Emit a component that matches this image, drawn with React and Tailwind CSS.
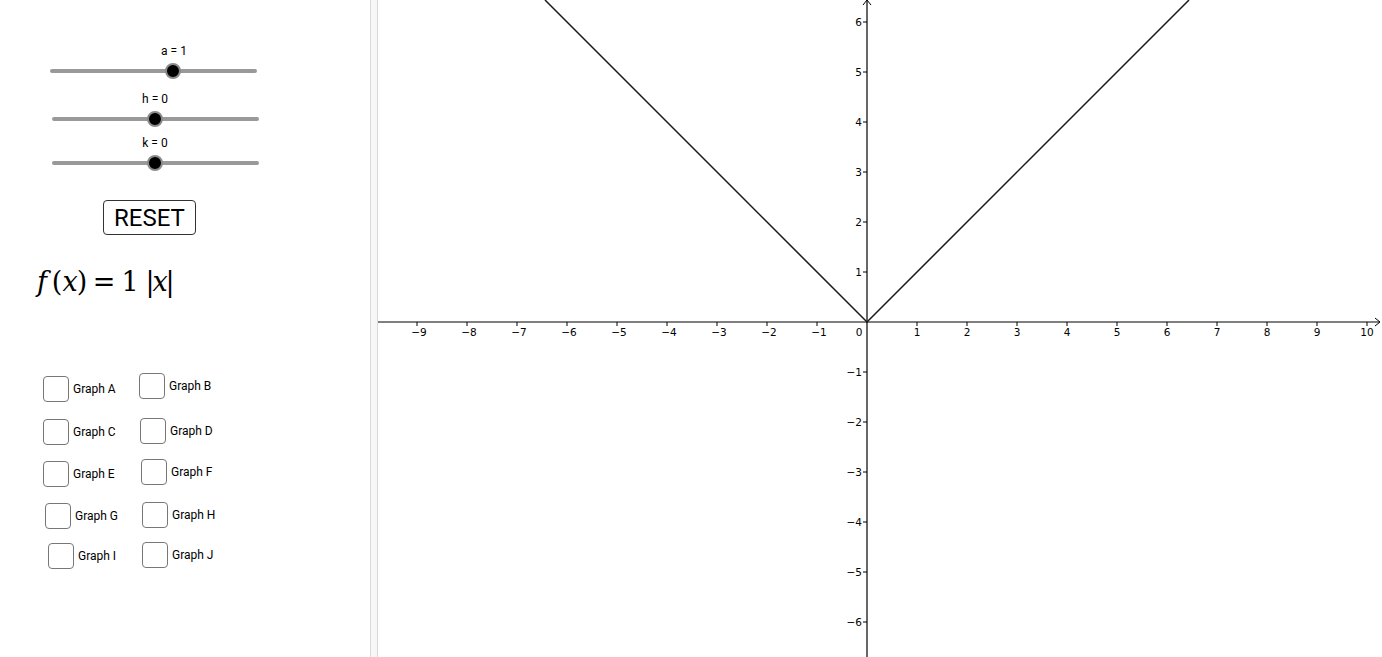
import React from 'react';

const sliders = [
  { label: 'a = 1', wrap: 'ml-[50px] mt-[44px]', knob: 'left-[115px]', tag: 'ml-[124px]' },
  { label: 'h = 0', wrap: 'ml-[52px] mt-[19px]', knob: 'left-[95px]', tag: 'ml-[103px]' },
  { label: 'k = 0', wrap: 'ml-[52px] mt-[15px]', knob: 'left-[95px]', tag: 'ml-[103px]' },
];

const rows = [
  { cls: 'mt-[76px] ml-[43px]', a: { t: 'Graph A', c: 'mt-[3px] w-[96px]' }, b: { t: 'Graph B', c: 'mt-0' } },
  { cls: 'mt-[16px] ml-[43px]', a: { t: 'Graph C', c: 'mt-[1px] w-[97px]' }, b: { t: 'Graph D', c: 'mt-0' } },
  { cls: 'mt-[14px] ml-[43px]', a: { t: 'Graph E', c: 'mt-[2px] w-[98px]' }, b: { t: 'Graph F', c: 'mt-0' } },
  { cls: 'mt-[15px] ml-[45px]', a: { t: 'Graph G', c: 'mt-[1px] w-[97px]' }, b: { t: 'Graph H', c: 'mt-0' } },
  { cls: 'mt-[13px] ml-[48px]', a: { t: 'Graph I', c: 'mt-[1px] w-[94px]' }, b: { t: 'Graph J', c: 'mt-0' } },
];

// formula glyphs, each in a fixed box so the spacing follows the TeX layout
const formula = [
  { g: 'f', c: 'w-[20px] italic' },
  { g: '(', c: 'w-[10px]' },
  { g: 'x', c: 'w-[16px] italic' },
  { g: ')', c: 'w-[8px]' },
  { g: '=', c: 'w-[36px]' },
  { g: '1', c: 'w-[16px]' },
  { g: '', c: 'w-[8px]' },
  { g: '|', c: 'w-[8px]' },
  { g: 'x', c: 'w-[12px] italic' },
  { g: '|', c: 'w-[8px]' },
];

const Slider = ({ s }) => (
  <div className={`${s.wrap} w-[207px] shrink-0`}>
    <div className={`${s.tag} w-0 flex justify-center`}>
      <span className="whitespace-nowrap text-[12px] leading-[14px] text-black">{s.label}</span>
    </div>
    <div className="relative mt-[11px] h-[4px] rounded-full bg-[#999]">
      <div className={`absolute ${s.knob} top-[-6px] w-[16px] h-[16px] rounded-full bg-black border-[2px] border-[#8a8a8a]`} />
    </div>
  </div>
);

const Check = ({ item }) => (
  <label className={`flex items-center gap-[4px] ${item.c}`}>
    <span className="w-[26px] h-[26px] shrink-0 rounded-[4px] border-[1.5px] border-[#777] bg-white" />
    <span className="text-[12px] text-black whitespace-nowrap">{item.t}</span>
  </label>
);

const xs = [-9, -8, -7, -6, -5, -4, -3, -2, -1, 1, 2, 3, 4, 5, 6, 7, 8, 9, 10];
const ys = [6, 5, 4, 3, 2, 1, -1, -2, -3, -4, -5, -6];
const OX = 489;
const OY = 322;
const U = 50;
const fmt = (n) => (n < 0 ? `\u2212${-n}` : `${n}`);

const Graph = () => (
  <svg width="1004" height="657" className="block" style={{ fontFamily: '"DejaVu Sans", sans-serif' }}>
    <line x1="0" y1={OY} x2="1002" y2={OY} stroke="#000" strokeWidth="1.2" />
    <polyline points="997,318 1002,322 997,326" fill="none" stroke="#000" strokeWidth="1" />
    <line x1={OX} y1="0" x2={OX} y2="657" stroke="#000" strokeWidth="1.2" />
    <polyline points="485,5 489,0 493,5" fill="none" stroke="#000" strokeWidth="1" />
    {xs.map((n) => (
      <g key={n}>
        <line x1={OX + n * U} y1={OY} x2={OX + n * U} y2={OY + 4} stroke="#000" strokeWidth="1" />
        <text x={OX + n * U + (n < 0 ? 2 : 0)} y={OY + 14} fontSize="10.5" textAnchor="middle" fill="#000">{fmt(n)}</text>
      </g>
    ))}
    <text x={OX - 8} y={OY + 14} fontSize="10.5" textAnchor="middle" fill="#000">0</text>
    {ys.map((n) => (
      <g key={n}>
        <line x1={OX - 4} y1={OY - n * U} x2={OX} y2={OY - n * U} stroke="#000" strokeWidth="1" />
        <text x={OX - 5} y={OY - n * U + 4} fontSize="10.5" textAnchor="end" fill="#000">{fmt(n)}</text>
      </g>
    ))}
    <polyline points={`${OX - 322},0 ${OX},${OY} ${OX + 322},0`} fill="none" stroke="#1a1a1a" strokeWidth="1.5" />
  </svg>
);

export default function App() {
  return (
    <div className="flex w-[1382px] h-[657px] overflow-hidden bg-white" style={{ fontFamily: 'Roboto, "Liberation Sans", sans-serif' }}>
      <aside className="w-[370px] shrink-0 flex flex-col">
        {sliders.map((s) => <Slider key={s.label} s={s} />)}
        <button className="ml-[103px] mt-[35px] w-[93px] h-[35px] shrink-0 rounded-[4px] border border-[#333] bg-white text-[24px] leading-none text-black">
          RESET
        </button>
        <div className="ml-[32px] mt-[32px] h-[30px] shrink-0 flex items-center text-[27px] leading-[30px] text-black" style={{ fontFamily: '"DejaVu Serif", serif' }}>
          {formula.map((f, i) => (
            <span key={i} className={`${f.c} flex justify-center shrink-0`}>{f.g}</span>
          ))}
        </div>
        {rows.map((r) => (
          <div key={r.a.t} className={`flex items-start shrink-0 ${r.cls}`}>
            <Check item={r.a} />
            <Check item={r.b} />
          </div>
        ))}
      </aside>
      <div className="w-[8px] shrink-0 border-l border-r border-[#d9d9d9] bg-[#f7f7f7]" />
      <main className="flex-1">
        <Graph />
      </main>
    </div>
  );
}
